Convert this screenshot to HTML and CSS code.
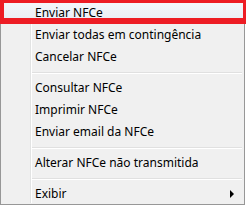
FILE: index.html
```html
<!DOCTYPE html>
<html lang="pt">
<head>
<meta charset="utf-8">
<title>Menu NFCe</title>
<link rel="stylesheet" href="styles.css">
</head>
<body>
<div class="menu">
  <div class="gutter"></div>
  <ul class="list">
    <li class="item hot">Enviar NFCe</li>
    <li class="item">Enviar todas em contingência</li>
    <li class="item">Cancelar NFCe</li>
    <li class="sep"></li>
    <li class="item">Consultar NFCe</li>
    <li class="item">Imprimir NFCe</li>
    <li class="item">Enviar email da NFCe</li>
    <li class="sep"></li>
    <li class="item">Alterar NFCe não transmitida</li>
    <li class="sep"></li>
    <li class="item sub">Exibir<span class="arrow"></span></li>
  </ul>
  <div class="mark"></div>
</div>
</body>
</html>
```
FILE: styles.css
```css
html, body {
  margin: 0;
  padding: 0;
  background: #ffffff;
}
.menu {
  position: relative;
  box-sizing: border-box;
  width: 245px;
  height: 205px;
  border: 1px solid #979797;
  background: #f0f0f0;
  font-family: "Noto Sans", "DejaVu Sans", sans-serif;
  font-size: 12px;
  color: #000;
  padding: 1px 0 0 0;
}
.gutter {
  position: absolute;
  left: 29px;
  top: 1px;
  bottom: 1px;
  width: 1px;
  border-right: 1px solid #ffffff;
  background: #e2e3e3;
}
.list {
  list-style: none;
  margin: 0;
  padding: 0 1px 0 1px;
}
.item {
  position: relative;
  height: 22px;
  line-height: 22px;
  padding-left: 33px;
  white-space: nowrap;
}
.item.hot {
  background: linear-gradient(#f5f7fa, #e7ecf4);
}
.sep {
  height: 9px;
  margin-left: 30px;
  margin-right: 1px;
  box-sizing: border-box;
  padding-top: 4px;
}
.sep::before {
  content: "";
  display: block;
  height: 1px;
  background: #e0e0e0;
  border-bottom: 1px solid #ffffff;
}
.arrow {
  position: absolute;
  right: 9px;
  top: 7px;
  width: 0;
  height: 0;
  border-top: 4px solid transparent;
  border-bottom: 4px solid transparent;
  border-left: 4px solid #000;
}
.mark {
  position: absolute;
  left: -1px;
  top: -1px;
  width: 246px;
  height: 24px;
  box-sizing: border-box;
  border: solid #ed1c24;
  border-width: 3px 3px 6px 4px;
}
```
